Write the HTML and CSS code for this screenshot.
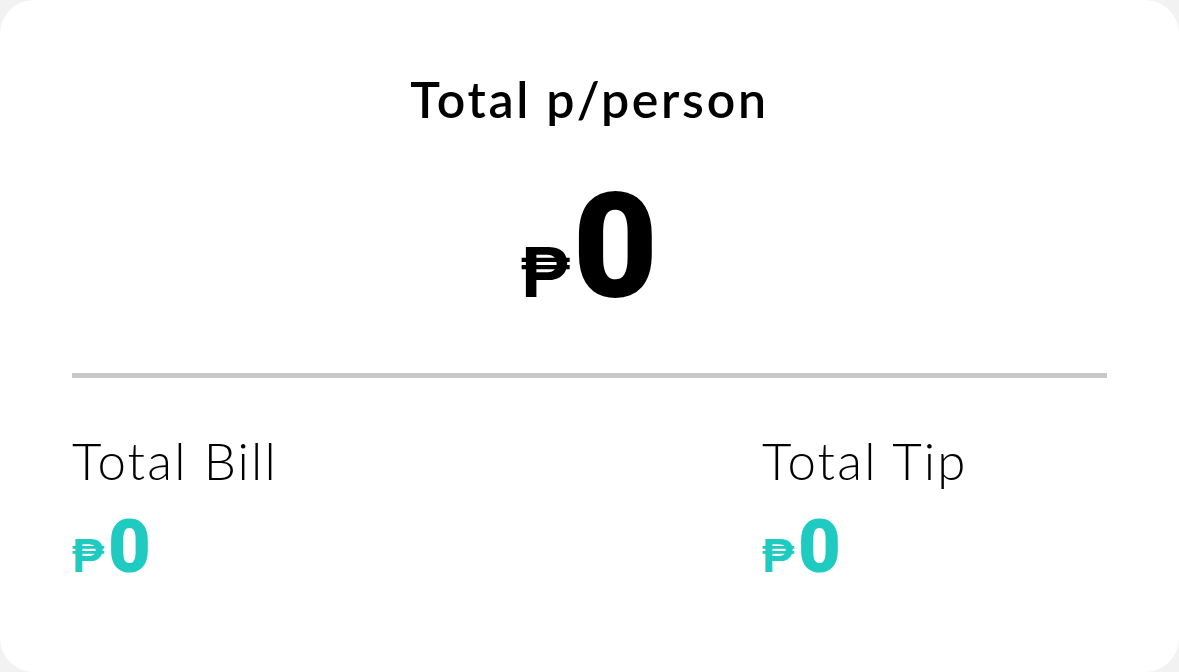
FILE: index.html
```html
<!DOCTYPE html>
<html lang="en">
<head>
<meta charset="utf-8">
<title>Tip Calculator Summary</title>
<link rel="stylesheet" href="styles.css">
</head>
<body>
<main class="card">
  <h1 class="title">Total p/person</h1>
  <div class="amount">
    <span class="peso">₱</span><span class="value">0</span>
  </div>
  <hr class="divider">
  <div class="totals">
    <div class="total">
      <div class="label">Total Bill</div>
      <div class="small-amount"><span class="small-peso">₱</span><span class="small-value">0</span></div>
    </div>
    <div class="total">
      <div class="label">Total Tip</div>
      <div class="small-amount"><span class="small-peso">₱</span><span class="small-value">0</span></div>
    </div>
  </div>
</main>
</body>
</html>
```

FILE: styles.css
```css
html, body {
  margin: 0;
  padding: 0;
  background: #f2f2f2;
}

.card {
  box-sizing: border-box;
  width: 1179px;
  height: 672px;
  background: #ffffff;
  border-radius: 34px;
  padding: 0 72px;
  display: flex;
  flex-direction: column;
}

.title {
  margin: 71px 0 0;
  font-family: "Lato", "Noto Sans", sans-serif;
  font-weight: 600;
  font-size: 50px;
  line-height: 56px;
  letter-spacing: 2.7px;
  text-align: center;
  color: #000;
}

.amount {
  margin-top: 47px;
  display: flex;
  justify-content: center;
  align-items: baseline;
  color: #000;
}

.peso {
  font-family: "Liberation Sans", "DejaVu Sans", sans-serif;
  font-weight: 700;
  font-size: 73px;
  line-height: 1;
  margin-right: 3px;
}

.value {
  font-family: "Roboto", "Liberation Sans", sans-serif;
  font-weight: 900;
  font-size: 147px;
  line-height: 1;
}

.divider {
  margin: 52px 0 0;
  border: 0;
  height: 5px;
  background: #c8c8c8;
}

.totals {
  margin-top: 56px;
  display: grid;
  grid-template-columns: 2fr 1fr;
}

.label {
  font-family: "Lato", "Noto Sans", sans-serif;
  font-weight: 300;
  font-size: 51px;
  line-height: 54px;
  letter-spacing: 2.2px;
  color: #000;
}

.small-amount {
  margin-top: 22px;
  display: flex;
  align-items: baseline;
  color: #1fcbc0;
}

.small-peso {
  font-family: "Liberation Sans", "DejaVu Sans", sans-serif;
  font-weight: 700;
  font-size: 48px;
  line-height: 1;
  margin-right: 4px;
}

.small-value {
  font-family: "Roboto", "Liberation Sans", sans-serif;
  font-weight: 900;
  font-size: 74px;
  line-height: 1;
}
```
